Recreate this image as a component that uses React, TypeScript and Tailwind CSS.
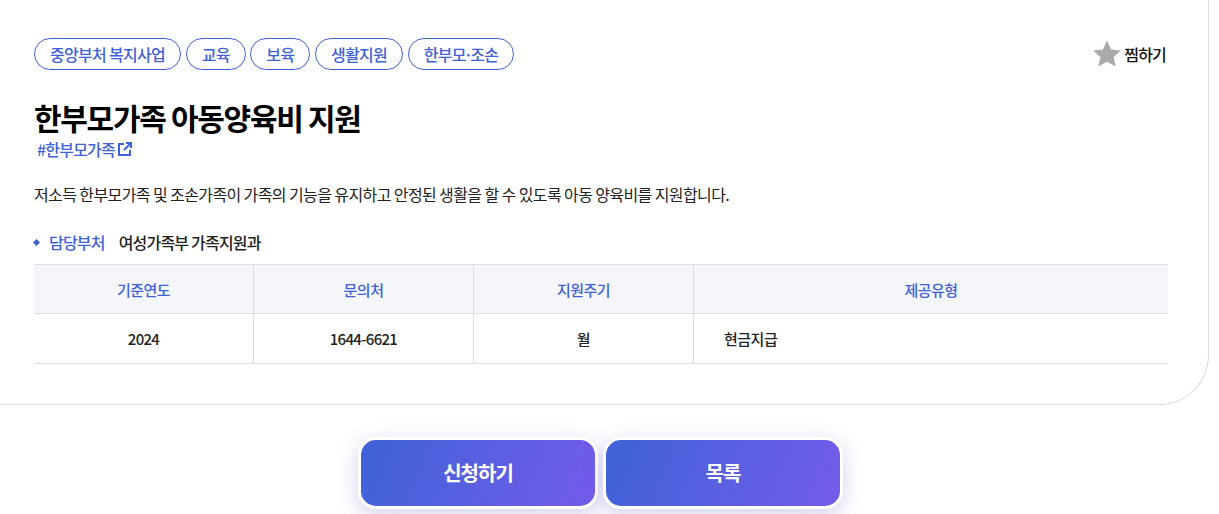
import React from 'react';

const font = "font-['Noto_Sans_CJK_KR','Noto_Sans',sans-serif]";

function Tag({ children }: { children: React.ReactNode }) {
  return (
    <span className="flex h-[32px] items-center rounded-full border border-[#3f62d7] px-[15px] text-[16px] font-medium tracking-[-0.7px] text-[#3f62d7]">
      {children}
    </span>
  );
}

function ActionButton({ label }: { label: string }) {
  return (
    <button className="flex h-[72px] w-[240px] items-center justify-center rounded-[18px] border-[3px] border-white bg-[linear-gradient(110deg,#3f62d7,#745ceb)] text-[20px] font-bold tracking-[-1px] text-white shadow-[0_6px_20px_rgba(80,70,190,0.25)]">
      {label}
    </button>
  );
}

export default function App() {
  return (
    <div className={`${font} h-[514px] w-[1219px] overflow-hidden bg-white`}>
      {/* Card */}
      <div className="h-[405px] w-[1209px] rounded-br-[50px] border-r border-b border-[#dedede] bg-white pt-[38px] pr-[40px] pl-[34px]">
        <div className="flex items-center justify-between">
          <div className="flex gap-[4.6px]">
            <Tag>중앙부처 복지사업</Tag>
            <Tag>교육</Tag>
            <Tag>보육</Tag>
            <Tag>생활지원</Tag>
            <Tag>
              한부모<span className="-mx-[2px]">·</span>조손
            </Tag>
          </div>
          <div className="mr-[2px] flex items-center gap-[3px]">
            <svg width="28" height="28" viewBox="0 0 24 24" className="fill-[#aaaaaa]">
              <path d="M12 .5l3.5 7.6 8.3.9-6.1 5.6 1.7 8.2L12 18.7l-7.4 4.1 1.7-8.2L.2 9l8.3-.9z" />
            </svg>
            <span className="text-[16px] font-medium tracking-[-0.8px] text-[#111111]">찜하기</span>
          </div>
        </div>

        <h1 className="mt-[27px] text-[30px] leading-[41px] font-bold tracking-[-1.3px] text-black">
          한부모가족 아동양육비 지원
        </h1>
        <div className="-mt-px ml-[3px] flex h-[24px] items-center gap-[3px] text-[16px] font-medium tracking-[-0.8px] text-[#3f62d7]">
          #한부모가족
          <svg width="14" height="14" viewBox="0 0 14 14" fill="none" stroke="currentColor" strokeWidth="2">
            <path d="M6 2H1v11h11V8" />
            <path d="M6 8l6.5-6.5M8 1h5v5" />
          </svg>
        </div>

        <p className="mt-[21px] text-[16px] leading-[24px] tracking-[-0.6px] text-[#222222]">
          저소득 한부모가족 및 조손가족이 가족의 기능을 유지하고 안정된 생활을 할 수 있도록 아동 양육비를 지원합니다.
        </p>

        <div className="mt-[24px] flex h-[24px] items-center text-[16px] font-medium tracking-[-0.8px]">
          <span className="mr-[10px] h-[5px] w-[5px] rotate-45 bg-[#3f62d7]" />
          <span className="mr-[14px] text-[#3f62d7]">담당부처</span>
          <span className="text-[#222222]">여성가족부 가족지원과</span>
        </div>

        {/* Info table */}
        <div className="mt-[10px] grid w-[1134px] grid-cols-[220px_220px_220px_1fr] border-t border-[#dedede] text-[15px] font-medium tracking-[-0.5px]">
          <div className="flex h-[49px] items-center justify-center border-r border-b border-[#dedede] bg-[#f5f6fb] pt-[2px] text-[#3f62d7]">기준연도</div>
          <div className="flex h-[49px] items-center justify-center border-r border-b border-[#dedede] bg-[#f5f6fb] pt-[2px] text-[#3f62d7]">문의처</div>
          <div className="flex h-[49px] items-center justify-center border-r border-b border-[#dedede] bg-[#f5f6fb] pt-[2px] text-[#3f62d7]">지원주기</div>
          <div className="flex h-[49px] items-center justify-center border-b border-[#dedede] bg-[#f5f6fb] pt-[2px] text-[#3f62d7]">제공유형</div>
          <div className="flex h-[50px] items-center justify-center border-r border-b border-[#dedede] pt-[2px] tracking-[-0.7px] text-[#222222]">2024</div>
          <div className="flex h-[50px] items-center justify-center border-r border-b border-[#dedede] pt-[2px] tracking-[-0.7px] text-[#222222]">1644-6621</div>
          <div className="flex h-[50px] items-center justify-center border-r border-b border-[#dedede] pt-[2px] text-[#222222]">월</div>
          <div className="flex h-[50px] items-center border-b border-[#dedede] pt-[2px] pl-[30px] text-[#222222]">현금지급</div>
        </div>
      </div>

      <div className="mt-[32px] flex justify-center gap-[5px] pr-[18px]">
        <ActionButton label="신청하기" />
        <ActionButton label="목록" />
      </div>
    </div>
  );
}
